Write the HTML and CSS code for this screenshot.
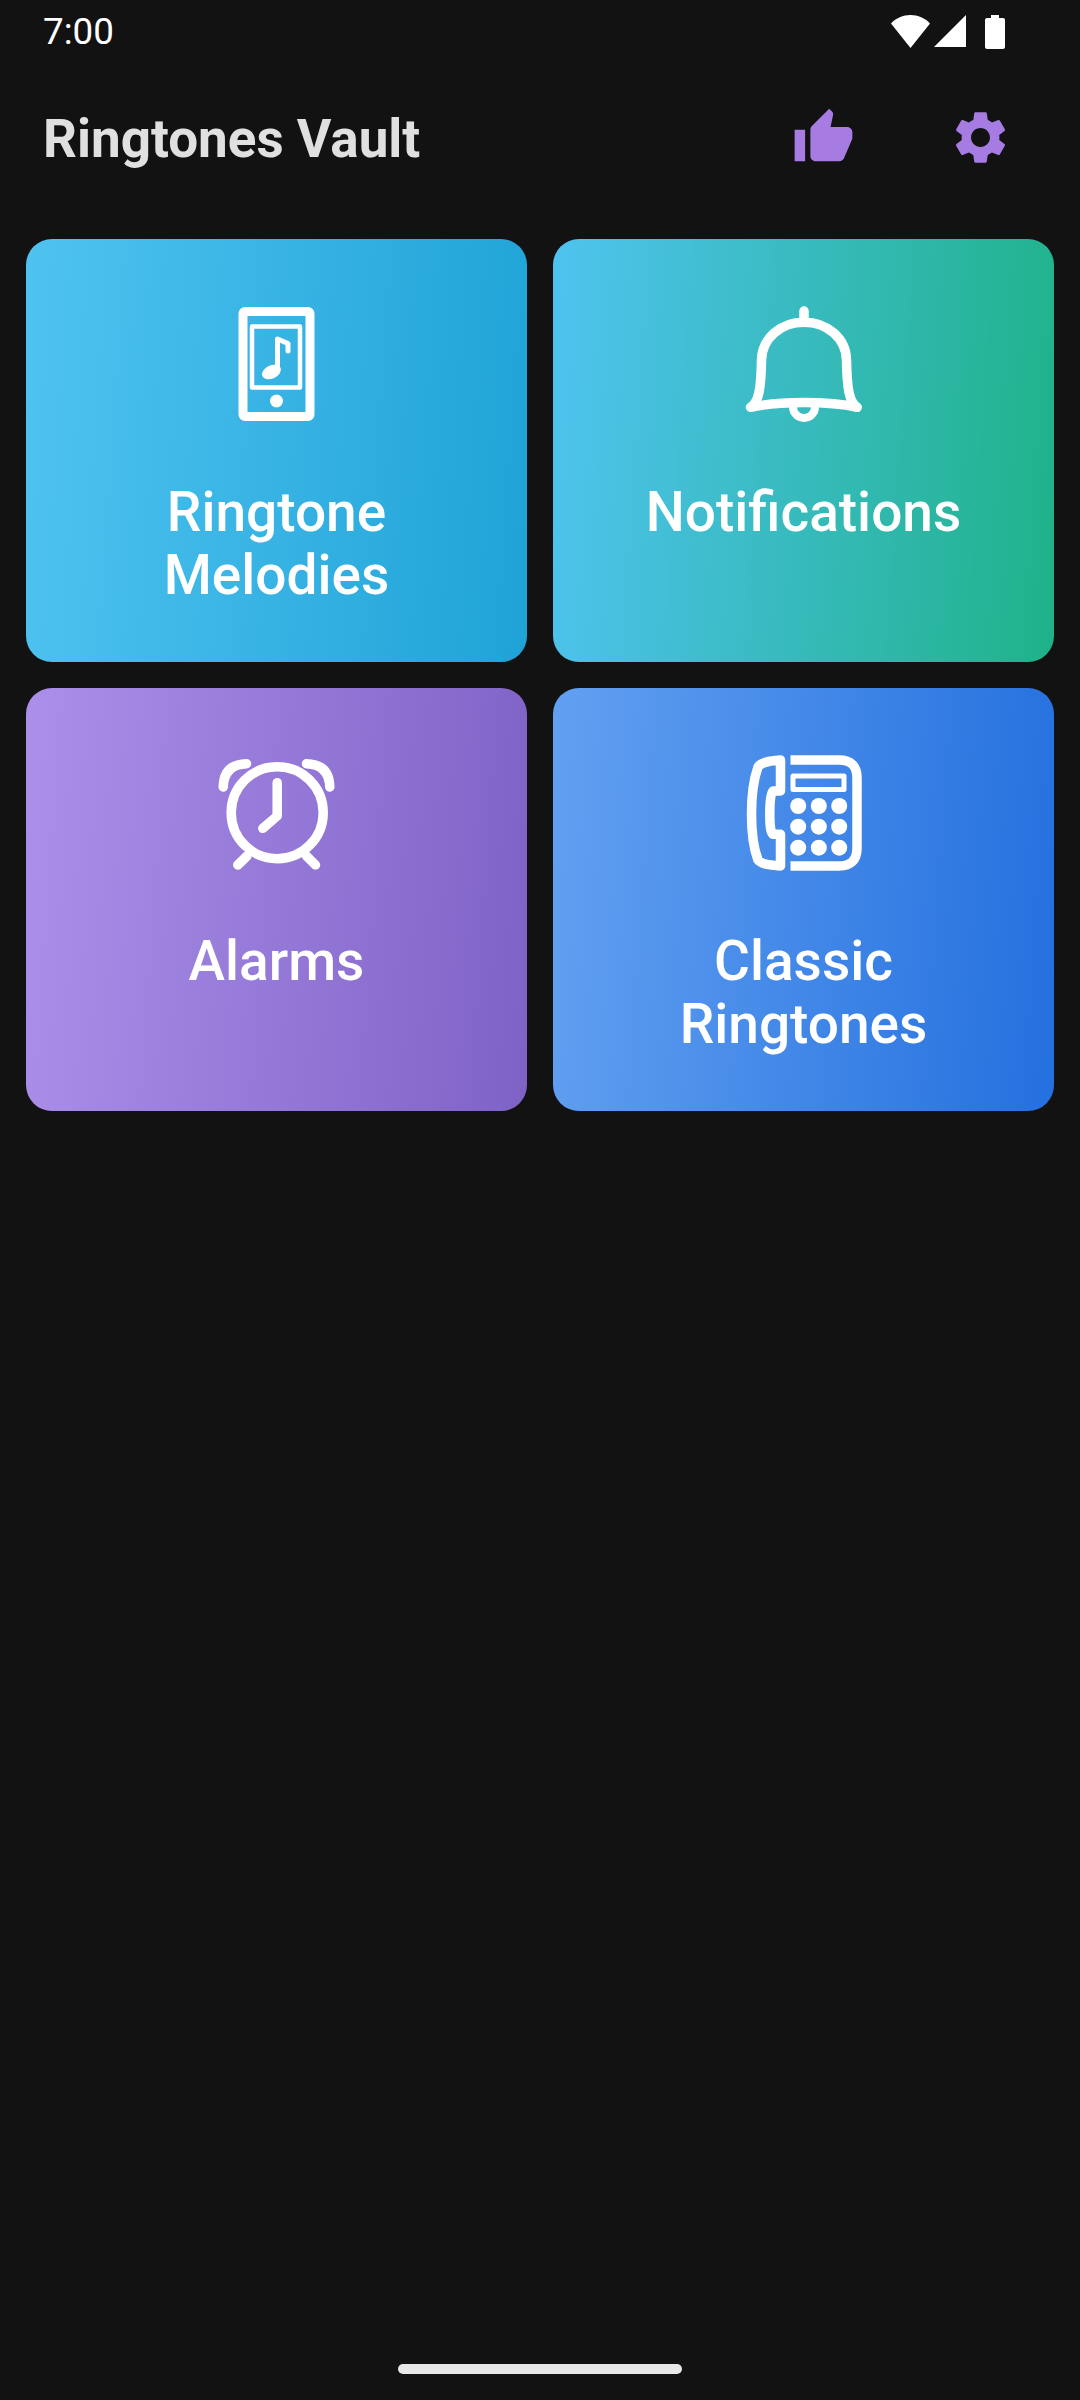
FILE: index.html
```html
<!DOCTYPE html>
<html lang="en">
<head>
  <meta charset="UTF-8" />
  <meta name="viewport" content="width=device-width, initial-scale=1.0" />
  <title>Ringtones Vault</title>
  <link rel="stylesheet" href="styles.css">
</head>
<body>
  <div class="page">
    <!-- Status bar -->
    <div class="status-bar">
      <span class="time">7:00</span>
      <div class="status-icons">
        <svg class="wifi" viewBox="0 0 39 33"><path d="M0 8.5C5 3 12 0 19.5 0S34 3 39 8.5L19.5 33z"/></svg>
        <svg class="signal" viewBox="0 0 32 32"><path d="M32 0V32H0z"/></svg>
        <svg class="battery" viewBox="0 0 20 34"><path d="M6 0H14V3H18C19.1 3 20 3.9 20 5V32C20 33.1 19.1 34 18 34H2C.9 34 0 33.1 0 32V5C0 3.9.9 3 2 3H6z"/></svg>
      </div>
    </div>

    <header class="app-bar">
      <h1 class="app-title">Ringtones Vault</h1>
      <div class="app-actions">
        <svg class="action-icon" viewBox="0 0 24 24"><path d="M1 21h4V9H1v12zm22-11c0-1.1-.9-2-2-2h-6.31l.95-4.57.03-.32c0-.41-.17-.79-.44-1.06L14.17 1 7.59 7.59C7.22 7.95 7 8.45 7 9v10c0 1.1.9 2 2 2h9c.83 0 1.54-.5 1.84-1.22l3.02-7.05c.09-.23.14-.47.14-.73v-2z"/></svg>
        <svg class="action-icon" viewBox="0 0 24 24"><path d="M19.14 12.94c.04-.3.06-.61.06-.94 0-.32-.02-.64-.07-.94l2.03-1.58c.18-.14.23-.41.12-.61l-1.92-3.32c-.12-.22-.37-.29-.59-.22l-2.39.96c-.5-.38-1.03-.7-1.62-.94l-.36-2.54c-.04-.24-.24-.41-.48-.41h-3.84c-.24 0-.43.17-.47.41l-.36 2.54c-.59.24-1.13.57-1.62.94l-2.39-.96c-.22-.08-.47 0-.59.22L2.74 8.87c-.12.21-.08.47.12.61l2.03 1.58c-.05.3-.09.63-.09.94s.02.64.07.94l-2.03 1.58c-.18.14-.23.41-.12.61l1.92 3.32c.12.22.37.29.59.22l2.39-.96c.5.38 1.03.7 1.62.94l.36 2.54c.05.24.24.41.48.41h3.84c.24 0 .44-.17.47-.41l.36-2.54c.59-.24 1.13-.56 1.62-.94l2.39.96c.22.08.47 0 .59-.22l1.92-3.32c.12-.22.07-.47-.12-.61l-2.01-1.58zM12 15.6c-1.98 0-3.6-1.62-3.6-3.6s1.62-3.6 3.6-3.6 3.6 1.62 3.6 3.6-1.62 3.6-3.6 3.6z"/></svg>
      </div>
    </header>

    <main class="grid">
      <div class="card card-melodies">
        <svg class="card-icon" viewBox="0 0 130 130">
          <rect x="31" y="13.5" width="67" height="105" rx="2" stroke-width="9"/>
          <rect x="40" y="28.5" width="48" height="61" stroke-width="4.5"/>
          <circle class="solid" cx="64.5" cy="103" r="6.5"/>
          <ellipse class="solid" cx="59.5" cy="74" rx="10" ry="6.5" transform="rotate(-25 59.5 74)"/>
          <path d="M65.5 73V41L76 45.5V53" stroke-width="5"/>
        </svg>
        <div class="card-label">Ringtone<br>Melodies</div>
      </div>

      <div class="card card-notifications">
        <svg class="card-icon" viewBox="0 0 130 130">
          <path d="M11.5 109.3C20 104 22 90 22.5 62C23 40 42 24.3 65 24.3S107 40 107.5 62C108 90 110 104 118.2 109.3C90 103 40 103 11.5 109.3Z"/>
          <path d="M65 13V24"/>
          <path d="M54 109a11 11 0 0 0 22 0" stroke-width="8"/>
        </svg>
        <div class="card-label">Notifications</div>
      </div>

      <div class="card card-alarms">
        <svg class="card-icon" viewBox="0 0 130 130">
          <circle cx="65.2" cy="65.7" r="46"/>
          <path d="M65.2 35.7V69L50.8 81.3"/>
          <path d="M11.2 40Q11.8 17.3 34.5 16.7"/>
          <path d="M117.8 40Q117.2 17.3 94.5 16.7"/>
          <path d="M25.8 118L35 109"/>
          <path d="M103.5 118L94.5 109"/>
        </svg>
        <div class="card-label">Alarms</div>
      </div>

      <div class="card card-classic">
        <svg class="card-icon" viewBox="0 0 130 130">
          <path d="M41.5 13V44H34Q30.8 46 30.8 67Q30.8 86 34 87.3H41.5V119C30 118 22 117 19 113C14 100 12.5 85 12.5 67C12.5 50 14 34 19 20C22 15 30 14 41.5 13Z"/>
          <path d="M51.5 13H100Q118 13 118 31V101Q118 119 100 119H51.5" stroke-linecap="butt"/>
          <rect x="54" y="29" width="51" height="13.5" stroke-width="5"/>
          <g class="solid">
            <circle cx="59.2" cy="59" r="8"/><circle cx="79.8" cy="59" r="8"/><circle cx="100.2" cy="59" r="8"/>
            <circle cx="59.2" cy="79.7" r="8"/><circle cx="79.8" cy="79.7" r="8"/><circle cx="100.2" cy="79.7" r="8"/>
            <circle cx="59.2" cy="100.7" r="8"/><circle cx="79.8" cy="100.7" r="8"/><circle cx="100.2" cy="100.7" r="8"/>
          </g>
        </svg>
        <div class="card-label">Classic<br>Ringtones</div>
      </div>
    </main>

    <div class="home-bar"></div>
  </div>
</body>
</html>
```

FILE: styles.css
```css
* {
  box-sizing: border-box;
}

body {
  font-family: 'Roboto', sans-serif;
  margin: 0;
  padding: 0;
  background-color: #121212;
}

.page {
  display: flex;
  flex-direction: column;
  height: 2400px;
}

.status-bar {
  display: flex;
  justify-content: space-between;
  align-items: center;
  height: 63px;
  padding: 0 75px 0 43px;
  color: #fff;
}

.time {
  font-size: 36.75px;
}

.status-icons {
  display: flex;
  align-items: flex-start;
  padding-top: 1px;
  fill: #fff;
}

.wifi {
  width: 39px;
  height: 33px;
  margin-right: 4px;
}

.signal {
  width: 32px;
  height: 32px;
  margin-right: 19px;
}

.battery {
  width: 20px;
  height: 34px;
}

.app-bar {
  display: flex;
  justify-content: space-between;
  align-items: center;
  height: 148px;
  padding: 0 68px 0 43px;
}

.app-title {
  margin: 3px 0 0;
  font-size: 53px;
  font-weight: 700;
  color: #e0e0e0;
}

.app-actions {
  display: flex;
  gap: 94px;
}

.action-icon {
  width: 63px;
  height: 63px;
  fill: #a67ce3;
}

.grid {
  display: grid;
  grid-template-columns: 1fr 1fr;
  grid-auto-rows: 423px;
  gap: 26px;
  padding: 28px 26px 0;
}

.card {
  display: flex;
  flex-direction: column;
  align-items: center;
  padding-top: 59px;
  border-radius: 26px;
  color: #fff;
}

.card-melodies {
  background: linear-gradient(94deg, #4fc3f0, #1fa3d7);
}

.card-notifications {
  background: linear-gradient(94deg, #4fc3f0, #1fb289);
}

.card-alarms {
  background: linear-gradient(94deg, #ab8fe9, #7f62c6);
}

.card-classic {
  background: linear-gradient(94deg, #62a0f1, #2470df);
}

.card-icon {
  width: 130px;
  height: 130px;
  fill: none;
  stroke: #fff;
  stroke-width: 9.5;
  stroke-linecap: round;
  stroke-linejoin: round;
}

.card-icon .solid {
  fill: #fff;
  stroke: none;
}

.card-label {
  margin-top: 53px;
  font-size: 55px;
  font-weight: 500;
  line-height: 63px;
  text-align: center;
}

.home-bar {
  width: 284px;
  height: 10px;
  margin: auto auto 26px;
  border-radius: 5px;
  background-color: #e8e8e8;
}
```
